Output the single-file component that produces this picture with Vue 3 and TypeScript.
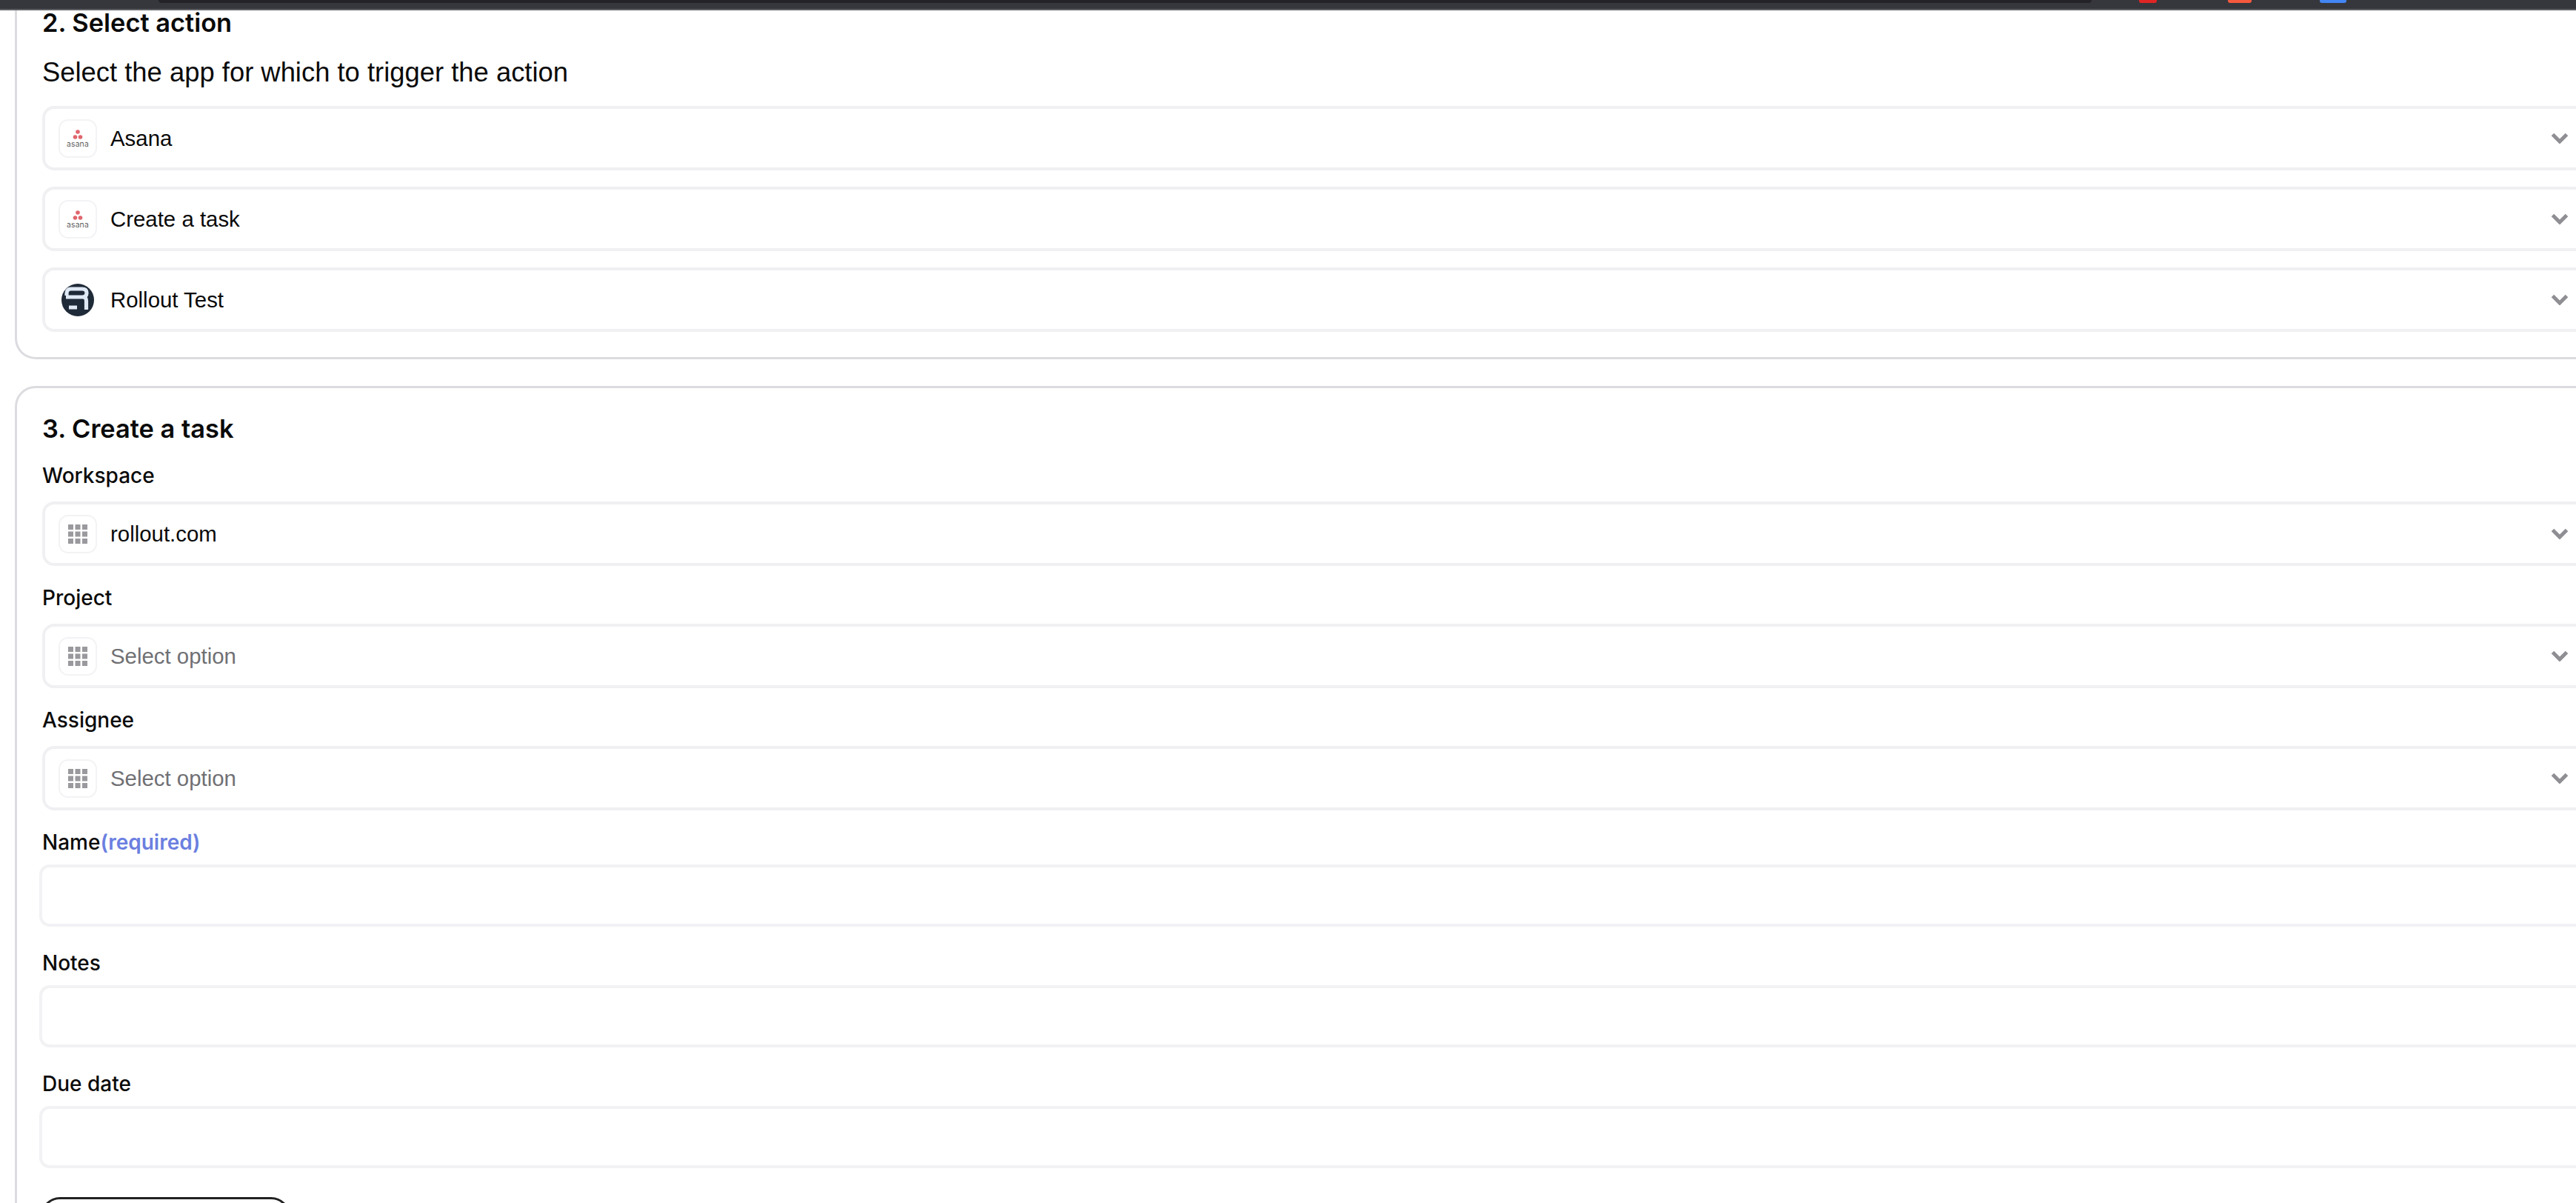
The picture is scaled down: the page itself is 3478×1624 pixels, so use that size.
<script setup lang="ts">
type Icon = "asana" | "rollout" | "grid";

interface SelectRow {
  icon: Icon;
  text: string;
  label?: string;
  placeholder?: boolean;
}

const actionRows: SelectRow[] = [
  { icon: "asana", text: "Asana" },
  { icon: "asana", text: "Create a task" },
  { icon: "rollout", text: "Rollout Test" },
];

const taskRows: SelectRow[] = [
  { icon: "grid", text: "rollout.com", label: "Workspace" },
  { icon: "grid", text: "Select option", label: "Project", placeholder: true },
  { icon: "grid", text: "Select option", label: "Assignee", placeholder: true },
];

const inputs = [
  { label: "Name", required: true },
  { label: "Notes", required: false },
  { label: "Due date", required: false },
];

const gridCells = Array.from({ length: 9 }, (_, i) => ({
  x: (i % 3) * 9.5,
  y: Math.floor(i / 3) * 9.5,
}));
</script>

<template>
  <div class="page">
    <div class="topbar">
      <div class="tab"></div>
      <i class="dot red"></i>
      <i class="dot orange"></i>
      <i class="dot blue"></i>
    </div>

    <section class="card first">
      <h2 class="title-action">2. Select action</h2>
      <p class="sub">Select the app for which to trigger the action</p>
      <div class="rows">
        <div v-for="row in actionRows" :key="row.text" class="row">
          <span v-if="row.icon === 'asana'" class="icon-box">
            <svg width="14" height="13" viewBox="0 0 14 13">
              <circle cx="7" cy="3" r="2.8" fill="#e0666e" />
              <circle cx="3.5" cy="10" r="2.8" fill="#e0666e" />
              <circle cx="10.5" cy="10" r="2.8" fill="#e0666e" />
            </svg>
            <span class="asana-word">asana</span>
          </span>
          <span v-else class="icon-plain">
            <svg width="44" height="44" viewBox="0 0 44 44">
              <defs>
                <filter id="soft"><feGaussianBlur stdDeviation="0.7" /></filter>
              </defs>
              <circle cx="22" cy="22" r="22" fill="#1f2a38" />
              <path
                d="M7 16V13Q7 7 13 7H28Q34 7 34 12.5Q34 18 28 18H6M30 18Q33.5 19 33.5 23V35M10 32H21"
                fill="none"
                stroke="#dfe9f5"
                stroke-width="5.2"
                filter="url(#soft)"
              />
            </svg>
          </span>
          <span class="row-text">{{ row.text }}</span>
          <svg class="chevron" width="24" height="15" viewBox="0 0 24 15">
            <path d="M2.5 2.5L12 12L21.5 2.5" fill="none" stroke="#8e8e93" stroke-width="5" />
          </svg>
        </div>
      </div>
    </section>

    <section class="card second">
      <h2 class="title-task">3. Create a task</h2>
      <div v-for="row in taskRows" :key="row.label" class="field select-field">
        <label class="label">{{ row.label }}</label>
        <div class="row">
          <span class="icon-box">
            <svg width="26" height="26" viewBox="0 0 26 26">
              <rect
                v-for="cell in gridCells"
                :key="`${cell.x}-${cell.y}`"
                :x="cell.x"
                :y="cell.y"
                width="7"
                height="7"
                fill="#9a9a9e"
              />
            </svg>
          </span>
          <span :class="['row-text', { placeholder: row.placeholder }]">{{ row.text }}</span>
          <svg class="chevron" width="24" height="15" viewBox="0 0 24 15">
            <path d="M2.5 2.5L12 12L21.5 2.5" fill="none" stroke="#8e8e93" stroke-width="5" />
          </svg>
        </div>
      </div>
      <div v-for="item in inputs" :key="item.label" class="field input-field">
        <label class="label">{{ item.label }}<span v-if="item.required" class="required">(required)</span></label>
        <div class="input"></div>
      </div>
      <div class="button"></div>
    </section>
  </div>
</template>

<style scoped>
.page {
  width: 3478px;
  height: 1624px;
  overflow: hidden;
  background: #fff;
  font-family: Inter, "Liberation Sans", sans-serif;
  color: #0a0a0a;
  display: flex;
  flex-direction: column;
}
.topbar {
  flex: none;
  height: 12px;
  background: #36373c;
  border-bottom: 2px solid #5f6064;
  display: flex;
  align-items: flex-start;
}
.tab {
  width: 2610px;
  height: 4px;
  margin-left: 214px;
  background: #232328;
  border-radius: 0 0 10px 10px;
}
.dot {
  display: block;
  height: 4px;
  border-radius: 0 0 3px 3px;
}
.red {
  width: 24px;
  margin-left: 64px;
  background: #e02424;
}
.orange {
  width: 32px;
  margin-left: 96px;
  background: #f5593d;
}
.blue {
  width: 36px;
  margin-left: 92px;
  background: #4285f4;
}
.card {
  flex: none;
  width: 3600px;
  margin-left: 20px;
  padding-left: 34px;
  border: 3px solid #dcdce0;
  border-radius: 28px;
  box-sizing: border-box;
}
.card.first {
  height: 471px;
  border-top: 0;
  border-top-left-radius: 0;
  border-top-right-radius: 0;
}
.card.second {
  height: 1200px;
  margin-top: 36px;
}
h2 {
  margin: 0;
  font-size: 34.4px;
  line-height: 40px;
  font-weight: 600;
}
.title-action {
  margin-top: -3px;
}
.title-task {
  margin-top: 35px;
}
.sub {
  margin: 27px 0 0 0;
  font-family: "Liberation Sans", Arial, sans-serif;
  font-size: 36.4px;
  line-height: 40px;
}
.rows {
  margin-top: 25px;
  display: flex;
  flex-direction: column;
  gap: 22px;
}
.row {
  box-sizing: border-box;
  width: 3434px;
  height: 87px;
  border: 4px solid #f0f0f3;
  border-radius: 16px;
  display: flex;
  align-items: center;
  padding: 0 19px 0 18px;
  background: #fff;
}
.icon-box {
  flex: none;
  box-sizing: border-box;
  width: 52px;
  height: 52px;
  border: 2px solid #f3f3f6;
  border-radius: 13px;
  display: flex;
  flex-direction: column;
  align-items: center;
  justify-content: center;
}
.icon-plain {
  flex: none;
  width: 52px;
  display: flex;
  justify-content: center;
}
.asana-word {
  font-size: 10.5px;
  line-height: 9px;
  margin-top: 2px;
  letter-spacing: 0.2px;
  font-weight: 300;
  color: #333;
}
.row-text {
  margin-left: 18px;
  font-family: "Liberation Sans", Arial, sans-serif;
  font-size: 29.4px;
  line-height: 34px;
  flex: 1;
}
.placeholder {
  color: #707074;
}
.label {
  display: block;
  font-size: 28px;
  line-height: 34px;
  font-weight: 500;
}
.select-field {
  margin-top: 26px;
}
.select-field .row {
  margin-top: 18px;
}
.input-field {
  margin-top: 32px;
}
.select-field + .input-field {
  margin-top: 26px;
}
.required {
  color: #6b7fe0;
  font-weight: 600;
}
.input {
  box-sizing: border-box;
  width: 3438px;
  height: 84px;
  margin: 13px 0 0 -4px;
  border: 4px solid #f2f2f5;
  border-radius: 14px;
}
.button {
  width: 337px;
  height: 80px;
  margin: 39px 0 0 -2px;
  box-sizing: border-box;
  border: 3px solid #222;
  border-radius: 26px;
}
</style>

<style>
html,
body {
  overflow: hidden;
  background: #fff;
}
</style>
